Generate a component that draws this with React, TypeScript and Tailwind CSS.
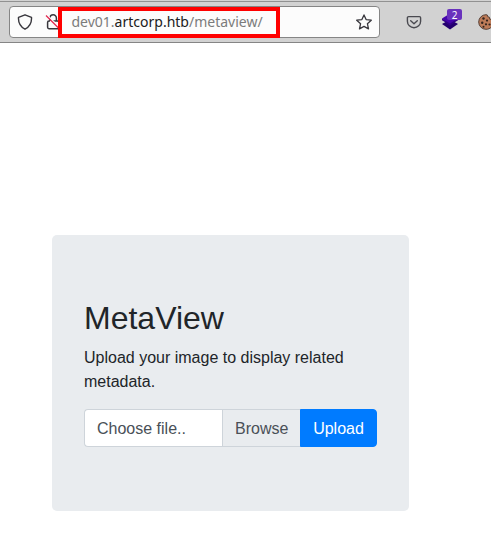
import React from "react";

function ShieldIcon() {
  return (
    <svg className="h-4 w-4 shrink-0" viewBox="0 0 16 16" fill="none" stroke="#38373d" strokeWidth="1.4" strokeLinejoin="round">
      <path d="M8 .8 14.500 3.400c.3 4.800-1.300 8.900-6.500 11.800C2.800 12.300 1.200 8.200 1.500 3.400Z" />
    </svg>
  );
}

function InsecureLockIcon() {
  return (
    <svg className="h-4 w-4 shrink-0" viewBox="0 0 16 16" fill="none">
      <path d="M5 7V4a3.200 3.200 0 0 1 6.400 0v3M5 7H4a1.400 1.400 0 0 0-1.400 1.400v4.900A1.400 1.400 0 0 0 4 14.700h9.500M8 7h4.500a1.400 1.400 0 0 1 1.400 1.400v5" stroke="#38373d" strokeWidth="1.5" />
      <path d="M2.300 1.300 15.500 14.500" stroke="#fcfcfc" strokeWidth="1.5" />
      <path d="M1 1.500 14.500 15" stroke="#e22850" strokeWidth="1.3" />
    </svg>
  );
}

function StarIcon() {
  return (
    <svg className="h-4 w-4 shrink-0" viewBox="0 0 16 16" fill="none" stroke="#38373d" strokeWidth="1.3" strokeLinejoin="round">
      <path d="m8 .9 2.100 4.700 5.200.6-3.900 3.500 1.100 5.200L8 12.400l-4.500 2.500 1.100-5.200L.7 6.200l5.200-.6Z" />
    </svg>
  );
}

function PocketIcon() {
  return (
    <svg className="h-4 w-4 shrink-0" viewBox="0 0 16 16" fill="none" stroke="#4a4a50" strokeWidth="1.4" strokeLinecap="round" strokeLinejoin="round">
      <path d="M2.600 2.600h10.800a1.200 1.200 0 0 1 1.200 1.200v3.400a6.600 6.600 0 0 1-13.200 0V3.800a1.200 1.200 0 0 1 1.200-1.200Z" />
      <path d="m4.700 6.700 3.300 3 3.300-3" />
    </svg>
  );
}

function LayersIcon() {
  return (
    <svg className="h-[17px] w-4" viewBox="0 0 16 17">
      <path d="m0 11 8-4.500 8 4.500-8 5.500Z" fill="#24006f" />
      <path d="m0 5.500 8-5 8 5-8 7Z" fill="#4605ad" />
      <path d="m0 5.500 8 5 8-5v1.800l-8 5-8-5Z" fill="#320086" />
    </svg>
  );
}

function CookieIcon() {
  return (
    <svg className="h-4 w-4 shrink-0" viewBox="0 0 16 16">
      <path d="M8 .7 9.300 1l.4 1.700 1.700.5.300 1.900 1.700.3.500 1.700 1.500.4C15.300 12 12.500 15.300 8 15.300A7.300 7.300 0 0 1 8 .7Z" fill="#bd7b58" stroke="#574036" strokeWidth="1" />
      <g fill="#33241f">
        <circle cx="5.500" cy="4.500" r="1.200" />
        <circle cx="9" cy="6.600" r="1.100" />
        <circle cx="4.200" cy="8.800" r="1.200" />
        <circle cx="8" cy="10.300" r="1.100" />
        <circle cx="5.500" cy="12.800" r="1" />
        <circle cx="11.500" cy="10.500" r="1.100" />
      </g>
    </svg>
  );
}

function Toolbar() {
  return (
    <header className="flex h-[43px] w-full overflow-hidden border-b border-[#858585] bg-[#d2d2d2] pl-[9px]">
      <div className="pointer-events-none absolute inset-x-0 top-0 h-0.5 border-b border-[#919191]" />
      <div className="relative mt-1.5 flex h-8 w-[371px] shrink-0 items-center rounded border border-[#858585] bg-[#fcfcfc] pl-[7px] pr-[7px]">
        <ShieldIcon />
        <div className="ml-3 flex"><InsecureLockIcon /></div>
        <span className="ml-[10.5px] flex-1 whitespace-nowrap font-['Noto_Sans','Open_Sans',sans-serif] text-[14px] leading-5 text-[#7b7b7b]">
          dev01.<span className="text-[#202020]">artcorp.htb</span>/metaview/
        </span>
        <StarIcon />
        <div className="absolute left-12 top-0 h-[31px] w-[222px] border-4 border-[#ff0000]" />
      </div>
      <div className="mt-3.5 ml-[26px]"><PocketIcon /></div>
      <div className="relative ml-5 mt-[13px] h-5 w-5 shrink-0">
        <LayersIcon />
        <span className="absolute -top-1 left-[5px] flex h-[11px] w-[15px] items-center justify-center rounded-[2px] bg-[#6932bd] font-['Noto_Sans',sans-serif] text-[10px] leading-none text-white">2</span>
      </div>
      <div className="ml-4 mt-3.5 shrink-0"><CookieIcon /></div>
    </header>
  );
}

export default function App() {
  return (
    <div className="relative h-[535px] w-[491px] overflow-hidden bg-white font-['Liberation_Sans',Arial,sans-serif] text-[#212529]">
      <Toolbar />
      <main className="ml-[52px] mt-48 h-[276px] w-[357px] rounded-[5px] bg-[#e9ecef] px-8 py-16">
        <h1 className="mb-2 text-[32px] font-normal leading-[39px]">MetaView</h1>
        <p className="mb-[15px] text-base leading-6">Upload your image to display related metadata.</p>
        <form className="flex h-[38px] text-base text-[#495057]" onSubmit={(event) => event.preventDefault()}>
          <label className="flex min-w-0 flex-1 rounded-l border border-r-0 border-[#ced4da] bg-white">
            <span className="flex-1 pt-[7px] pl-3 leading-6">Choose file..</span>
            <span className="w-[78px] border-l border-[#ced4da] bg-[#e9ecef] pt-[7px] pl-3 leading-6">Browse</span>
          </label>
          <button className="w-[77px] rounded-r border border-[#007bff] bg-[#007bff] pt-0.5 leading-6 text-white" type="submit">Upload</button>
        </form>
      </main>
    </div>
  );
}
